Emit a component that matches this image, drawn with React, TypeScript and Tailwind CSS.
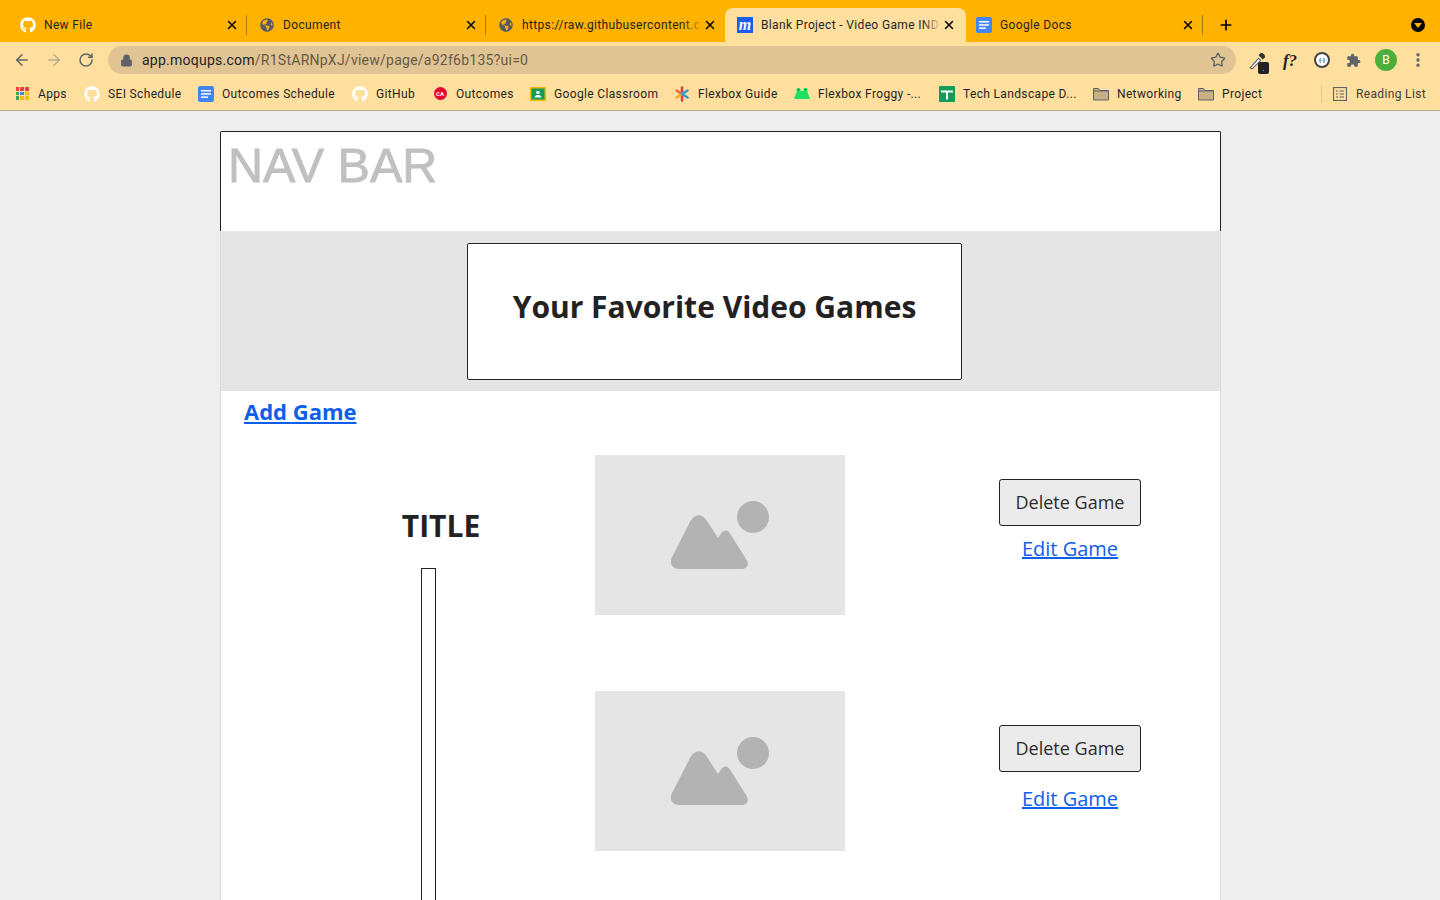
import { Plus, X, ArrowLeft, ArrowRight, RotateCw, Lock, Star, MoreVertical } from "lucide-react";
import { FaGithub, FaGlobeAmericas } from "react-icons/fa";

const ui = { fontFamily: "Roboto, 'Liberation Sans', sans-serif" };

const DocsIcon = () => (
  <svg width="16" height="16" viewBox="0 0 16 16">
    <rect width="16" height="16" rx="2" fill="#4285f4" />
    <rect x="3" y="4" width="10" height="1.5" fill="#fff" />
    <rect x="3" y="7.2" width="10" height="1.5" fill="#fff" />
    <rect x="3" y="10.4" width="7" height="1.5" fill="#fff" />
  </svg>
);

const GithubIcon = () => <FaGithub className="h-4 w-4 text-white" />;

const GlobeIcon = () => <FaGlobeAmericas className="h-[14px] w-[14px] text-[#565a66]" />;

const MoqupsIcon = () => (
  <span className="flex h-4 w-4 items-center justify-center bg-[#1a5cf0] pb-px text-[16px] font-bold italic leading-none text-white" style={{ fontFamily: "'Liberation Serif', serif" }}>
    m
  </span>
);

const FolderIcon = () => (
  <svg width="16" height="14" viewBox="0 0 16 14">
    <path d="M.5 1.5h5l1.5 2h8.500v9.500H.5z" fill="#c9b083" stroke="#5f6368" />
    <path d="M.5 4h15" stroke="#5f6368" />
  </svg>
);

const tabs = [
  { title: "New File", icon: <GithubIcon />, sep: true },
  { title: "Document", icon: <GlobeIcon />, sep: true },
  { title: "https://raw.githubusercontent.c", icon: <GlobeIcon />, fade: true },
  { title: "Blank Project - Video Game IND", icon: <MoqupsIcon />, active: true, fade: true },
  { title: "Google Docs", icon: <DocsIcon />, sep: true },
];

const Tab = ({ title, icon, active, fade, sep }: { title: string; icon: React.ReactNode; active?: boolean; fade?: boolean; sep?: boolean }) => (
  <div className={`flex h-[34px] shrink-0 items-center pl-3 ${active ? "-mr-[2px] w-[241px] rounded-t-lg bg-[#ffdf9e] pr-[10px]" : "w-[239px]"} ${!active && !sep ? "pr-2" : ""}`}>
    <span className="flex w-4 shrink-0 justify-center">{icon}</span>
    <span className="relative ml-2 min-w-0 flex-1 whitespace-nowrap text-[12px] tracking-[0.35px] text-[#1f1f1f]">
      {title}
      {fade && (
        <span className={`absolute right-0 top-0 h-full w-5 bg-gradient-to-r from-transparent ${active ? "to-[#ffdf9e]" : "to-[#ffb300]"}`} />
      )}
    </span>
    <X className="relative h-[14px] w-[14px] shrink-0 text-black" strokeWidth={2.5} />
    {sep && <span className="ml-[7px] h-[20px] w-px shrink-0 bg-[#a87a10]" />}
  </div>
);

const Classroom = () => (
  <svg width="16" height="14" viewBox="0 0 16 14">
    <rect width="16" height="14" rx="1" fill="#f4b400" />
    <rect x="1.5" y="1.5" width="13" height="11" fill="#0f9d58" />
    <circle cx="8" cy="5.5" r="1.8" fill="#fff" />
    <path d="M4.5 10.5c.5-2 2-2.500 3.500-2.500s3 .5 3.500 2.500z" fill="#fff" />
  </svg>
);

const Asterisk = () => (
  <svg width="16" height="16" viewBox="0 0 16 16" strokeWidth="2.5" strokeLinecap="round">
    <path d="M8 1.500V8" stroke="#e8344e" />
    <path d="M8 8v6.500" stroke="#e8344e" />
    <path d="M2.500 4.500 8 8" stroke="#f0663a" />
    <path d="M13.500 4.500 8 8" stroke="#2e9ccb" />
    <path d="M2.500 11.500 8 8" stroke="#f5a623" />
    <path d="M13.500 11.500 8 8" stroke="#2e9ccb" />
  </svg>
);

const Frog = () => (
  <svg width="16" height="14" viewBox="0 0 16 14">
    <circle cx="4.500" cy="3" r="2.200" fill="#1fe060" />
    <circle cx="11.500" cy="3" r="2.200" fill="#1fe060" />
    <path d="M3 4h10l2.500 6.500V12H.5v-1.500z" fill="#1fe060" />
    <circle cx="4.500" cy="2.800" r=".7" fill="#0a5a20" />
    <circle cx="11.500" cy="2.800" r=".7" fill="#0a5a20" />
  </svg>
);

const Landscape = () => (
  <svg width="16" height="16" viewBox="0 0 16 16">
    <rect width="16" height="16" rx="1" fill="#0f9d58" />
    <path d="M2 5.500h12M8 5.500v8" stroke="#fff" strokeWidth="2" />
  </svg>
);

const AppsGrid = () => (
  <div className="grid h-[13px] w-[13px] grid-cols-3 gap-px">
    {["#ea4335", "#ea4335", "#ea4335", "#34a853", "#4285f4", "#fbbc05", "#34a853", "#fbbc05", "#fbbc05"].map((c, i) => (
      <span key={i} style={{ backgroundColor: c }} />
    ))}
  </div>
);

const OutcomesIcon = () => (
  <span className="flex h-[13px] w-[13px] items-center justify-center rounded-full bg-[#e8002d] text-[6px] font-bold leading-none tracking-normal text-white">CA</span>
);

const bookmarks = [
  { label: "Apps", icon: <AppsGrid />, w: "w-[84px]", pl: "pl-[14px]" },
  { label: "SEI Schedule", icon: <GithubIcon />, w: "w-[114px]", pl: "" },
  { label: "Outcomes Schedule", icon: <DocsIcon />, w: "w-[154px]", pl: "" },
  { label: "GitHub", icon: <GithubIcon />, w: "w-[80px]", pl: "" },
  { label: "Outcomes", icon: <OutcomesIcon />, w: "w-[98px]", pl: "" },
  { label: "Google Classroom", icon: <Classroom />, w: "w-[144px]", pl: "" },
  { label: "Flexbox Guide", icon: <Asterisk />, w: "w-[120px]", pl: "" },
  { label: "Flexbox Froggy -...", icon: <Frog />, w: "w-[145px]", pl: "" },
  { label: "Tech Landscape D...", icon: <Landscape />, w: "w-[154px]", pl: "" },
  { label: "Networking", icon: <FolderIcon />, w: "w-[105px]", pl: "" },
  { label: "Project", icon: <FolderIcon />, w: "w-[80px]", pl: "" },
];

const ImagePlaceholder = () => (
  <div className="flex h-[160px] w-[250px] items-center justify-center bg-[#e5e5e5]">
    <svg width="100" height="70" viewBox="0 0 100 70" fill="#b3b3b3">
      <circle cx="83" cy="17" r="16" />
      <path d="M9 69C2 69-1 63 2 57L19 24C24 13 32 13 37 21L48 38L50 35C53 29 58 29 61 35L76 59C80 65 77 69 71 69Z" />
    </svg>
  </div>
);

const DeleteButton = ({ className }: { className: string }) => (
  <button className={`h-[47px] w-[142px] rounded-[3px] border border-[#222] bg-[#ebebeb] text-[18px] text-[#2b2b2b] ${className}`}>Delete Game</button>
);

export default function App() {
  return (
    <div className="flex h-screen flex-col overflow-hidden bg-[#eeeeee]" style={ui}>
      <div className="flex h-[42px] shrink-0 items-end bg-[#ffb300] pl-2">
        {tabs.map((t) => (
          <Tab key={t.title} {...t} />
        ))}
        <Plus className="mb-[9px] ml-[15px] h-4 w-4 text-black" strokeWidth={2.5} />
        <span className="mb-[10px] ml-[177px] flex h-[14px] w-[14px] items-center justify-center rounded-full bg-black">
          <span className="h-0 w-0 border-x-[4px] border-t-[5px] border-x-transparent border-t-[#ffb300]" />
        </span>
      </div>

      <div className="flex h-9 shrink-0 items-center bg-[#ffdf9e] pl-[13px]">
        <ArrowLeft className="h-[18px] w-[18px] text-[#5f6368]" strokeWidth={2} />
        <ArrowRight className="ml-[14px] h-[18px] w-[18px] text-[#b8ab8a]" strokeWidth={2} />
        <RotateCw className="ml-[15px] h-4 w-4 text-[#5f6368]" strokeWidth={2.25} />
        <div className="ml-[14px] flex h-7 w-[1128px] items-center rounded-full bg-[#e0c493] pl-3 pr-[10px]">
          <Lock className="h-[13px] w-[13px] fill-[#5f6368] text-[#5f6368]" />
          <span className="ml-[9px] flex-1 text-[14px] tracking-[0.25px] text-[#665a45]">
            <span className="text-[#1f1f1f]">app.moqups.com</span>/R1StARNpXJ/view/page/a92f6b135?ui=0
          </span>
          <Star className="h-4 w-4 text-[#5f6368]" strokeWidth={2} />
        </div>
        <div className="relative ml-[11px] flex h-5 w-5 items-center justify-center">
          <svg width="19" height="19" viewBox="0 0 18 18">
            <path d="M2 16l8-9 2 2-8 8z" fill="#f4f4f4" stroke="#5f6368" />
            <path d="M10 4l4 4 2-2c1-2-2-5-4-4z" fill="#333" />
          </svg>
          <span className="absolute -bottom-[4px] -right-[2px] flex h-[12px] w-[11px] items-end justify-center rounded-[2px] bg-[#222] text-[7px] leading-[9px] text-white">.</span>
        </div>
        <span className="ml-[13px] w-5 text-center text-[17px] italic leading-none text-[#222]" style={{ fontFamily: "'Liberation Serif', serif" }}>
          <b>f?</b>
        </span>
        <span className="ml-[14px] flex h-4 w-4 items-center justify-center rounded-full border-2 border-[#444] bg-white text-[6px] font-bold leading-none text-[#444]">{"{·}"}</span>
        <svg className="ml-[16px]" width="15" height="15" viewBox="0 0 24 24" fill="#5f6368">
          <path d="M20.5 11H19V7c0-1.100-.9-2-2-2h-4V3.500C13 2.120 11.880 1 10.500 1S8 2.120 8 3.500V5H4c-1.100 0-1.990.9-1.990 2v3.800H3.500c1.490 0 2.700 1.210 2.700 2.700s-1.210 2.700-2.700 2.700H2V20c0 1.100.9 2 2 2h3.800v-1.500c0-1.490 1.210-2.700 2.700-2.700 1.490 0 2.700 1.210 2.700 2.700V22H17c1.100 0 2-.9 2-2v-4h1.500c1.380 0 2.500-1.120 2.500-2.500S21.880 11 20.500 11z" />
        </svg>
        <span className="ml-[14px] flex h-[22px] w-[22px] shrink-0 items-center justify-center rounded-full bg-[#4caf3a] text-[12px] text-white">B</span>
        <MoreVertical className="ml-[12px] h-[18px] w-[18px] text-[#5f6368]" strokeWidth={2.5} />
      </div>

      <div className="flex h-[33px] shrink-0 items-center border-b border-[#b8ab8a] bg-[#ffdf9e] pb-px pr-[14px] text-[12px] tracking-[0.35px] text-[#1f1f1f]">
        {bookmarks.map((b) => (
          <div key={b.label} className={`flex shrink-0 items-center whitespace-nowrap ${b.w} ${b.pl}`}>
            <span className="flex w-4 shrink-0 justify-center">{b.icon}</span>
            <span className="ml-2">{b.label}</span>
          </div>
        ))}
        <div className="ml-auto flex items-center">
          <span className="h-[18px] w-px bg-[#d9c79a]" />
          <svg className="ml-[11px]" width="14" height="14" viewBox="0 0 14 14" fill="none" stroke="#5f6368">
            <rect x=".5" y=".5" width="13" height="13" strokeWidth="1.200" />
            <path d="M3 4h2M3 7h2M3 10h2M6.500 4H11M6.500 7H11M6.500 10H11" />
          </svg>
          <span className="ml-[9px] text-[#3c3c3c]">Reading List</span>
        </div>
      </div>

      <div className="ml-[220px] flex w-[1001px] flex-1 flex-col overflow-hidden pt-5">
        <div className="h-[100px] shrink-0 rounded-t-[2px] border border-b-0 border-[#222] bg-white pl-[7px]">
          <span className="block pt-[5px] text-[48.5px] leading-[57px] text-[#c0c0c0] [-webkit-text-stroke:0.8px_#c0c0c0]" style={{ fontFamily: "'Liberation Sans', sans-serif" }}>NAV BAR</span>
        </div>

        <main className="flex flex-1 flex-col overflow-hidden border-x border-[#dcdcdc] bg-white" style={{ fontFamily: "'Open Sans', sans-serif" }}>
          <div className="flex h-[160px] shrink-0 items-start bg-[#e5e5e5] pl-[246px] pt-3">
            <div className="flex h-[137px] w-[495px] items-center justify-center rounded-[2px] border border-[#222] bg-white pb-[10px]">
              <h1 className="text-[30px] font-bold leading-10 text-[#222]">Your Favorite Video Games</h1>
            </div>
          </div>

          <a href="#" className="ml-[23px] mt-[3px] self-start text-[22px] font-bold leading-[34px] text-[#0d5ee8] underline">Add Game</a>

          <div className="mt-[27px] flex flex-1">
            <div className="ml-[180px] flex w-[80px] flex-col pt-[51px]">
              <h2 className="whitespace-nowrap text-center text-[30px] font-bold leading-10 text-[#222]">TITLE</h2>
              <div className="ml-[20px] mt-[22px] min-h-[400px] w-[15px] flex-1 border border-[#222] bg-white" />
            </div>

            <div className="ml-[114px] flex w-[250px] flex-col gap-[76px]">
              <ImagePlaceholder />
              <ImagePlaceholder />
            </div>

            <div className="ml-[154px] flex w-[142px] flex-col items-center">
              <DeleteButton className="mt-6" />
              <a href="#" className="mt-[9px] text-[20px] leading-[27px] text-[#0d5ee8] underline">Edit Game</a>
              <DeleteButton className="mt-[163px]" />
              <a href="#" className="mt-[13px] text-[20px] leading-[27px] text-[#0d5ee8] underline">Edit Game</a>
            </div>
          </div>
        </main>
      </div>
    </div>
  );
}
